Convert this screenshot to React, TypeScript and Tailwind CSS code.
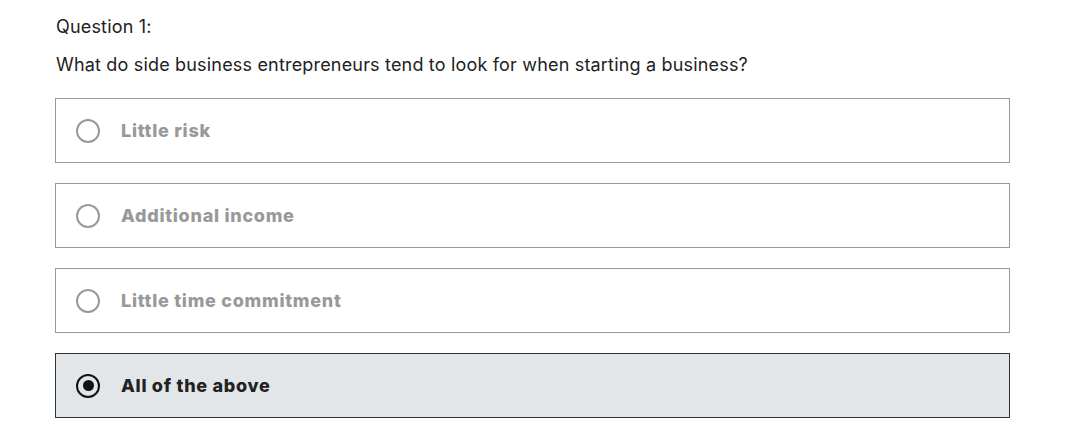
const OPTIONS = [
  { id: 'a', label: 'Little risk' },
  { id: 'b', label: 'Additional income' },
  { id: 'c', label: 'Little time commitment' },
  { id: 'd', label: 'All of the above' },
]

const SELECTED = 'd'

export default function App() {
  return (
    <div className="min-h-screen bg-white font-['Inter',sans-serif] text-[#222]">
      <div className="pl-[56px] pr-[80px] pt-[15px]">
        <p className="text-[18px] leading-6 tracking-[0.01em]">Question 1:</p>
        <p className="mt-[14px] text-[18px] leading-6 tracking-[0.01em]">
          What do side business entrepreneurs tend to look for when starting a business?
        </p>

        <div className="mt-[21px] flex flex-col gap-[20px] -ml-px w-[955px]">
          {OPTIONS.map((opt) => {
            const active = opt.id === SELECTED
            return (
              <label
                key={opt.id}
                className={`flex h-[65px] items-center gap-[21px] border pl-[20px] ${
                  active ? 'border-[#333] bg-[#e3e6e9]' : 'border-[#999] bg-white'
                }`}
              >
                {/* radio */}
                <span
                  className={`flex h-[24px] w-[24px] items-center justify-center rounded-full border-2 ${
                    active ? 'border-[#111]' : 'border-[#999]'
                  }`}
                >
                  {active && <span className="h-[11px] w-[11px] rounded-full bg-[#111]" />}
                </span>
                <span
                  className={`text-[18px] font-extrabold tracking-[0.04em] ${
                    active ? 'text-[#222]' : 'text-[#999]'
                  }`}
                >
                  {opt.label}
                </span>
              </label>
            )
          })}
        </div>
      </div>
    </div>
  )
}
